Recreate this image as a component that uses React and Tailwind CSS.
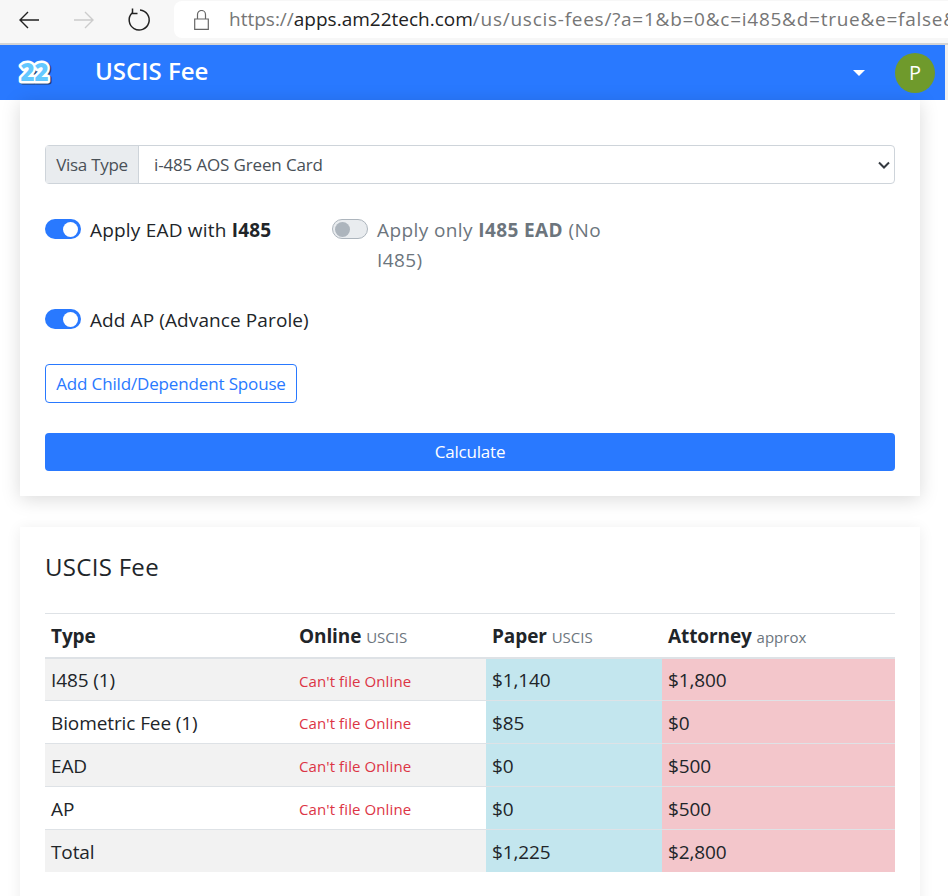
import React from "react";

function Toggle({ disabled }) {
  return disabled ? (
    <span className="mt-[4px] flex h-[20px] w-[36px] shrink-0 items-center rounded-full border border-[#adb5bd] bg-[#e9ecef] px-[2px]">
      <span className="h-[15px] w-[15px] rounded-full bg-[#adb5bd]" />
    </span>
  ) : (
    <span className="mt-[4px] flex h-[20px] w-[36px] shrink-0 items-center justify-end rounded-full bg-[#2979ff] px-[3px]">
      <span className="h-[15px] w-[15px] rounded-full bg-white" />
    </span>
  );
}

const rows = [
  ["I485 (1)", "Can't file Online", "$1,140", "$1,800", true],
  ["Biometric Fee (1)", "Can't file Online", "$85", "$0", false],
  ["EAD", "Can't file Online", "$0", "$500", true],
  ["AP", "Can't file Online", "$0", "$500", false],
  ["Total", "", "$1,225", "$2,800", true],
];

export default function App() {
  return (
    <div className="h-[896px] w-[948px] overflow-hidden bg-white font-['Open_Sans','Noto_Sans',sans-serif] text-[19px] tracking-[-0.1px] text-[#212529]">
      <div className="flex h-[43px] items-center bg-[#f7f7f7] pb-[4px]">
        <svg className="ml-[18px] h-[22px] w-[22px] shrink-0 text-[#222]" viewBox="0 0 22 22" fill="none" stroke="currentColor" strokeWidth="1.4">
          <path d="M21 11H2M10 3l-8 8 8 8" />
        </svg>
        <svg className="ml-[33px] h-[22px] w-[22px] shrink-0 text-[#ccc]" viewBox="0 0 22 22" fill="none" stroke="currentColor" strokeWidth="1.4">
          <path d="M1 11h19M12 3l8 8-8 8" />
        </svg>
        <svg className="ml-[32px] h-[24px] w-[24px] shrink-0 text-[#222]" viewBox="0 0 24 24" fill="none" stroke="currentColor" strokeWidth="1.5">
          <path d="M13 2A10 10 0 1 1 5 5M5.5 0.5V5.5H10.5" />
        </svg>
        <div className="ml-[23px] flex h-[37px] min-w-0 flex-1 items-center overflow-hidden rounded-l-[8px] bg-white pl-[20px]">
          <svg className="h-[20px] w-[15px] shrink-0 text-[#666]" viewBox="0 0 15 20" fill="none" stroke="currentColor" strokeWidth="1.2">
            <path d="M0.7 9h13.6v10.3H0.7zM3.5 9V4.5a4 4 0 0 1 8 0V9" />
          </svg>
          <span className="ml-[20px] whitespace-nowrap text-[19px] tracking-[0.74px] text-[#767676]">
            <span className="tracking-normal">https://<span className="text-[#222]">apps.am22tech.com</span></span>/us/uscis-fees/?a=1&amp;b=0&amp;c=i485&amp;d=true&amp;e=false&amp;f
          </span>
        </div>
      </div>
      <div className="h-[2px] bg-[#d4d4d4]" />
      <header className="flex h-[55px] items-center border-r-[3px] border-[#f0f0f0] bg-[#2979ff] pr-[10px] text-white">
        <svg className="ml-[15px] h-[30px] w-[40px] overflow-visible" viewBox="0 0 40 30">
          <text x="21" y="24" textAnchor="middle" fontSize="24" fontWeight="800" fontFamily="Open Sans, sans-serif" fill="#1d3f73" stroke="#1d3f73" strokeWidth="5" strokeLinejoin="round">22</text>
          <text x="19.5" y="22.5" textAnchor="middle" fontSize="24" fontWeight="800" fontFamily="Open Sans, sans-serif" fill="#63c8ff" stroke="#ffffff" strokeWidth="5" strokeLinejoin="round" paintOrder="stroke">22</text>
        </svg>
        <h1 className="mb-[3px] ml-[40px] text-[24px] font-semibold tracking-normal">USCIS Fee</h1>
        <span className="ml-auto h-0 w-0 border-x-[6px] border-t-[6px] border-x-transparent border-t-white" />
        <span className="ml-[30px] flex h-[40px] w-[40px] items-center justify-center rounded-full bg-[#6f9a2c] text-[20px] text-white">P</span>
      </header>

      <main className="ml-[20px] w-[900px]">
        <section className="h-[396px] bg-white px-[25px] pt-[45px] shadow-[0_3px_18px_rgba(0,0,0,0.15)]">
          <div className="flex h-[39px] rounded-[4px] border border-[#ced4da] text-[17px] tracking-[-0.15px] text-[#495057]">
            <span className="flex w-[93px] items-center justify-center border-r border-[#ced4da] bg-[#e9ecef] pt-[1px] tracking-[-0.3px]">Visa Type</span>
            <div className="flex flex-1 items-center justify-between pl-[15px] pr-[3px] pt-[1px]">
              <span>i-485 AOS Green Card</span>
              <svg className="h-[10px] w-[14px] text-[#343a40]" viewBox="0 0 14 10" fill="none" stroke="currentColor" strokeWidth="2">
                <path d="M2 2.5l5 5 5-5" />
              </svg>
            </div>
          </div>

          <div className="mt-[31px] flex">
            <div className="flex w-[287px] gap-[9px] leading-[30px] tracking-[0.2px]">
              <Toggle />
              <span>Apply EAD with <b className="font-bold">I485</b></span>
            </div>
            <div className="flex w-[287px] gap-[9px] leading-[30px] tracking-[0.4px] text-[#6c757d]">
              <Toggle disabled />
              <span>Apply only <b className="font-bold">I485 EAD</b> (No I485)</span>
            </div>
          </div>

          <div className="mt-[30px] flex gap-[9px] leading-[30px] tracking-[0.1px]">
            <Toggle />
            <span>Add AP (Advance Parole)</span>
          </div>

          <button className="mt-[29px] block h-[39px] w-[252px] rounded-[4px] border border-[#2979ff] text-[17px] tracking-[-0.15px] text-[#2979ff]">
            Add Child/Dependent Spouse
          </button>

          <button className="mt-[30px] block h-[38px] w-full rounded-[4px] bg-[#2979ff] text-[17px] tracking-[-0.2px] text-white">Calculate</button>
        </section>

        <section className="mt-[31px] h-[400px] bg-white px-[25px] pt-[22px] shadow-[0_2px_14px_rgba(0,0,0,0.08)]">
          <h2 className="text-[24px] font-medium leading-[36px] tracking-[0.3px]">USCIS Fee</h2>
          <table className="mt-[28px] w-[850px] table-fixed border-collapse text-left">
            <colgroup>
              <col className="w-[248px]" />
              <col className="w-[193px]" />
              <col className="w-[176px]" />
              <col className="w-[233px]" />
            </colgroup>
            <thead>
              <tr className="h-[44px] border-y border-t-[#dee2e6] border-b-[2px] border-b-[#dee2e6]">
                <th className="px-[6px] pt-[1px] font-bold">Type</th>
                <th className="px-[6px] pt-[1px] font-bold">Online <span className="text-[15px] font-normal tracking-normal text-[#6c757d]">USCIS</span></th>
                <th className="px-[6px] pt-[1px] font-bold">Paper <span className="text-[15px] font-normal tracking-normal text-[#6c757d]">USCIS</span></th>
                <th className="px-[6px] pt-[1px] font-bold">Attorney <span className="text-[15px] font-normal tracking-normal text-[#6c757d]">approx</span></th>
              </tr>
            </thead>
            <tbody>
              {rows.map((r) => (
                <tr key={r[0]} className={`h-[43px] border-b border-[#dee2e6] last:h-[42px] last:border-b-0 ${r[4] ? "bg-[#f2f2f2]" : "bg-white"}`}>
                  <td className="px-[6px] pt-[2px]">{r[0]}</td>
                  <td className="px-[6px] pt-[3px] text-[15px] tracking-[0.1px] text-[#dc3545]">{r[1]}</td>
                  <td className="bg-[#c3e6ee] px-[6px] pt-[2px]">{r[2]}</td>
                  <td className="bg-[#f3c6cb] px-[6px] pt-[2px]">{r[3]}</td>
                </tr>
              ))}
            </tbody>
          </table>
        </section>
      </main>
    </div>
  );
}
